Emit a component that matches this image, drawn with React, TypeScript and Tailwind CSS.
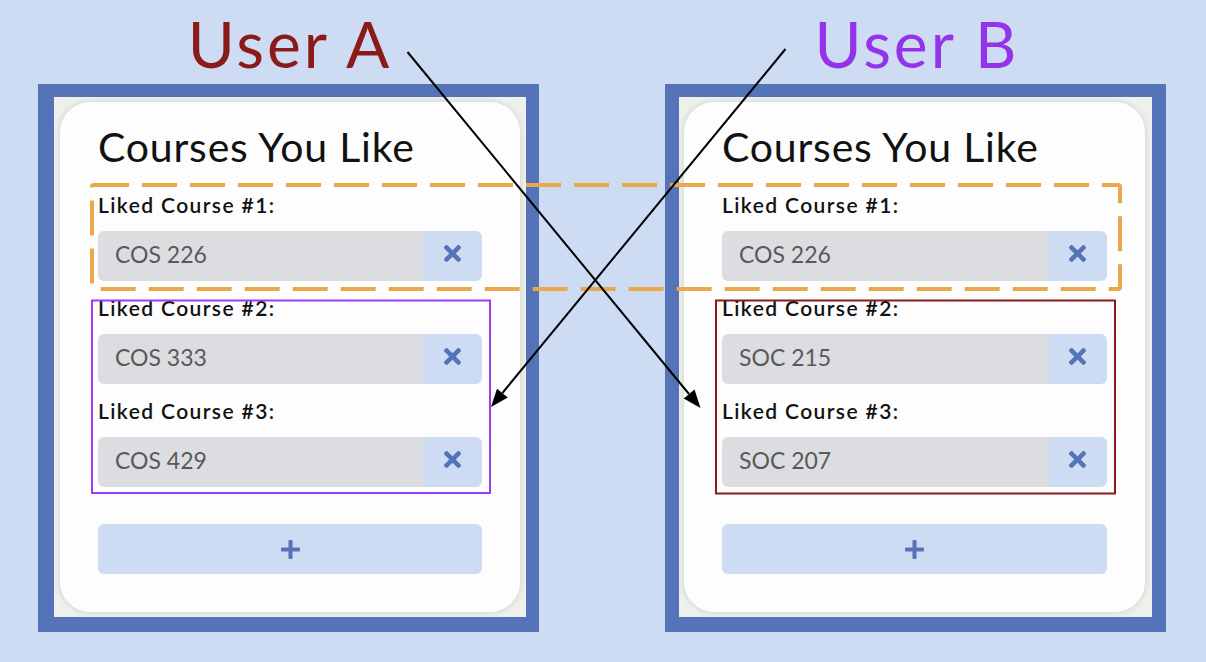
import React from "react";

type Column = {
  user: string;
  userClass: string;
  panelClass: string;
  courses: string[];
};

const columns: Column[] = [
  {
    user: "User A",
    userClass: "text-[#8b1a1a]",
    panelClass: "border-l-[16px] border-r-[13px] px-[6px]",
    courses: ["COS 226", "COS 333", "COS 429"],
  },
  {
    user: "User B",
    userClass: "text-[#9333ea]",
    panelClass: "border-l-[14px] border-r-[14px] pl-[5px] pr-[7px]",
    courses: ["COS 226", "SOC 215", "SOC 207"],
  },
];

function TimesIcon() {
  return (
    <svg viewBox="0 80 352 352" width="17" height="17" fill="#5473b8">
      <path d="M242.72 256l100.07-100.07c12.28-12.28 12.28-32.19 0-44.48l-22.24-22.24c-12.28-12.28-32.19-12.28-44.48 0L176 189.28 75.93 89.21c-12.28-12.28-32.19-12.28-44.48 0L9.21 111.45c-12.28 12.28-12.28 32.19 0 44.48L109.28 256 9.21 356.07c-12.28 12.28-12.28 32.19 0 44.48l22.24 22.24c12.28 12.28 32.2 12.28 44.48 0L176 322.72l100.07 100.07c12.28 12.28 32.2 12.28 44.48 0l22.24-22.24c12.28-12.28 12.28-32.19 0-44.48L242.72 256z" />
    </svg>
  );
}

function PlusIcon() {
  return (
    <svg viewBox="0 32 448 448" width="19" height="19" fill="#5473b8">
      <path d="M416 208H272V64c0-17.67-14.33-32-32-32h-32c-17.67 0-32 14.33-32 32v144H32c-17.67 0-32 14.33-32 32v32c0 17.67 14.33 32 32 32h144v144c0 17.67 14.33 32 32 32h32c17.67 0 32-14.33 32-32V304h144c17.67 0 32-14.33 32-32v-32c0-17.67-14.33-32-32-32z" />
    </svg>
  );
}

function CourseField({ index, course }: { index: number; course: string }) {
  return (
    <div className="flex flex-col">
      <div className="h-[24px] leading-[24px] text-[21px] font-semibold tracking-[1.4px] text-[#111] mb-[14px]">
        Liked Course #{index}:
      </div>
      <div className="flex h-[50px] rounded-[6px] overflow-hidden">
        <div className="flex-1 flex items-center bg-[#dcdde0] pl-[17px] pb-[3px] text-[23px] text-[#595959]">
          {course}
        </div>
        <div className="w-[59px] flex items-center justify-center bg-[#cedcf3] pb-[5px]">
          <TimesIcon />
        </div>
      </div>
    </div>
  );
}

function UserColumn({ column }: { column: Column }) {
  return (
    <div className="flex flex-col items-center w-[501px]">
      <div className={`h-[64px] leading-[64px] text-[64px] tracking-[3px] pl-[3px] ${column.userClass}`}>
        {column.user}
      </div>
      <div
        className={`mt-[8px] w-[501px] border-t-[13px] border-b-[15px] border-[#5473b8] bg-[#efefec] py-[5px] ${column.panelClass}`}
      >
        <div className="bg-[#fdfdfd] rounded-[30px] shadow-[0_0_6px_rgba(0,0,0,0.14)] px-[38px] pt-[21px] pb-[38px]">
          <div className="h-[48px] leading-[48px] text-[41px] tracking-[0.8px] text-[#111]">Courses You Like</div>
          <div className="mt-[22px] flex flex-col gap-[15px]">
            {column.courses.map((c, i) => (
              <CourseField key={i} index={i + 1} course={c} />
            ))}
          </div>
          <div className="mt-[37px] h-[50px] rounded-[6px] bg-[#cedcf3] flex items-center justify-center">
            <PlusIcon />
          </div>
        </div>
      </div>
    </div>
  );
}

export default function App() {
  return (
    <div
      className="relative w-[1206px] h-[662px] bg-[#cedcf3] overflow-hidden"
      style={{ fontFamily: "Lato, 'Open Sans', sans-serif" }}
    >
      <div className="flex pt-[12px] pl-[38px] gap-[126px]">
        {columns.map((col) => (
          <UserColumn key={col.user} column={col} />
        ))}
      </div>

      {/* annotation overlay */}
      <svg className="absolute inset-0 pointer-events-none" width="1206" height="662">
        <rect x="92" y="185" width="1028" height="104" rx="2" fill="none" stroke="#e9a84c" strokeWidth="4" strokeDasharray="35 13" />
        <rect x="92" y="300.5" width="398" height="192.5" fill="none" stroke="#9b3cf2" strokeWidth="2" />
        <rect x="716" y="300.5" width="399" height="193" fill="none" stroke="#8b1a1a" strokeWidth="2" />
        <line x1="407.5" y1="52" x2="689" y2="394" stroke="#000" strokeWidth="2" />
        <polygon points="700.5,408 683.7,398.6 694.5,389.6" fill="#000" />
        <line x1="785.5" y1="49" x2="502.4" y2="393" stroke="#000" strokeWidth="2" />
        <polygon points="491,407 507.8,397.5 497,388.7" fill="#000" />
      </svg>
    </div>
  );
}
